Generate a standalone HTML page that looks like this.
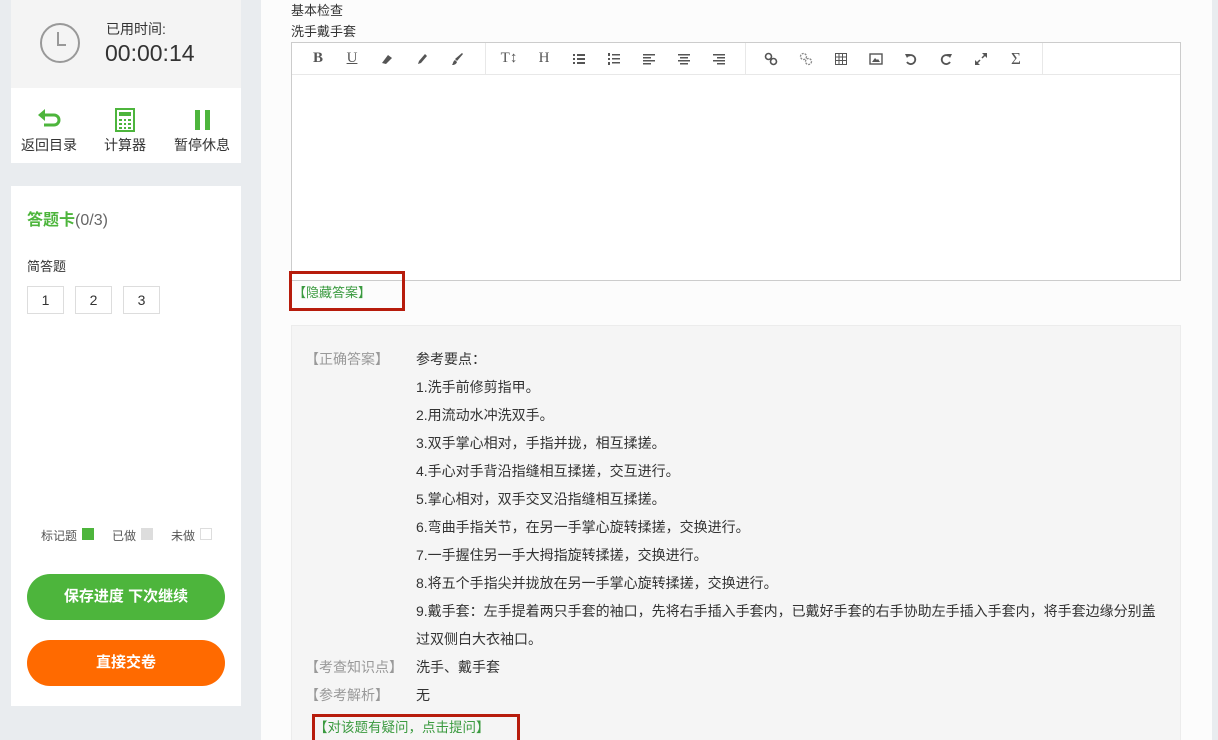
<!DOCTYPE html>
<html><head><meta charset="utf-8"><style>
*{margin:0;padding:0;box-sizing:border-box}
html,body{width:1218px;height:740px;overflow:hidden}
body{background:#e9ecef;font-family:"Liberation Sans","Noto Sans CJK SC",sans-serif;font-size:13px;color:#333;position:relative}
.a{position:absolute}
.g{color:#4db53c}
.tb span{position:absolute;top:0;height:31px;line-height:31px;width:30px;margin-left:-15px;text-align:center;color:#555;font-family:"Liberation Serif",serif;font-size:15px}
.tb svg{position:absolute;top:9px;margin-left:-7px}
.ln{position:absolute;left:416px;line-height:28px;white-space:nowrap;font-size:14px}
.lb{position:absolute;left:305px;color:#999;line-height:28px;font-size:14px}
</style></head><body>
<div class="a" style="left:11px;top:0;width:230px;height:88px;background:#f4f4f4"></div>
<svg class="a" style="left:39px;top:22px" width="42" height="42" viewBox="0 0 42 42"><circle cx="21" cy="21" r="19" fill="none" stroke="#999" stroke-width="2"/><path d="M19 10v13h8" fill="none" stroke="#999" stroke-width="2"/></svg>
<div class="a" style="left:106px;top:19px;font-size:14px;color:#333">已用时间:</div>
<div class="a" style="left:105px;top:40px;font-size:23px;color:#333">00:00:14</div>
<div class="a" style="left:11px;top:88px;width:230px;height:75px;background:#fff"></div>
<svg class="a" style="left:37px;top:109px" width="26" height="22" viewBox="0 0 26 22"><path d="M4 6h13a5 5 0 0 1 0 10H7" fill="none" stroke="#4db53c" stroke-width="3"/><path d="M1 6l7-6v12z" fill="#4db53c"/></svg>
<div class="a" style="left:21px;top:135px;font-size:14px">返回目录</div>
<svg class="a" style="left:115px;top:108px" width="20" height="24" viewBox="0 0 20 24"><rect x="1" y="1" width="18" height="22" fill="none" stroke="#4db53c" stroke-width="2"/><rect x="4" y="4" width="12" height="4" fill="#4db53c"/><path d="M4 11h3v2H4zM9 11h2v2H9zM13 11h3v2h-3zM4 15h3v2H4zM9 15h2v2H9zM13 15h3v2h-3zM4 19h3v2H4zM9 19h2v2H9zM13 19h3v2h-3z" fill="#4db53c"/></svg>
<div class="a" style="left:104px;top:135px;font-size:14px">计算器</div>
<div class="a" style="left:195px;top:110px;width:5px;height:20px;background:#4db53c"></div>
<div class="a" style="left:205px;top:110px;width:5px;height:20px;background:#4db53c"></div>
<div class="a" style="left:174px;top:135px;font-size:14px">暂停休息</div>
<div class="a" style="left:11px;top:186px;width:230px;height:520px;background:#fff"></div>
<div class="a" style="left:27px;top:206px;font-size:16px"><b class="g">答题卡</b><span style="color:#666">(0/3)</span></div>
<div class="a" style="left:27px;top:256px;font-size:13px">简答题</div>
<div class="a" style="left:27px;top:286px;width:37px;height:28px;border:1px solid #ddd;text-align:center;line-height:26px;font-size:14px">1</div>
<div class="a" style="left:75px;top:286px;width:37px;height:28px;border:1px solid #ddd;text-align:center;line-height:26px;font-size:14px">2</div>
<div class="a" style="left:123px;top:286px;width:37px;height:28px;border:1px solid #ddd;text-align:center;line-height:26px;font-size:14px">3</div>
<div class="a" style="left:41px;top:527px;font-size:12px;color:#555">标记题</div>
<div class="a" style="left:82px;top:528px;width:12px;height:12px;background:#4db53c"></div>
<div class="a" style="left:112px;top:527px;font-size:12px;color:#555">已做</div>
<div class="a" style="left:141px;top:528px;width:12px;height:12px;background:#ddd"></div>
<div class="a" style="left:171px;top:527px;font-size:12px;color:#555">未做</div>
<div class="a" style="left:200px;top:528px;width:12px;height:12px;border:1px solid #ddd"></div>
<div class="a" style="left:27px;top:574px;width:198px;height:46px;border-radius:23px;background:#4db53c;color:#fff;text-align:center;line-height:46px;font-size:15px;font-weight:bold">保存进度 下次继续</div>
<div class="a" style="left:27px;top:640px;width:198px;height:46px;border-radius:23px;background:#ff6a00;color:#fff;text-align:center;line-height:46px;font-size:15px;font-weight:bold">直接交卷</div>
<div class="a" style="left:261px;top:0;width:951px;height:740px;background:#fcfcfc"></div>
<div class="a" style="left:291px;top:2px;line-height:18px">基本检查</div>
<div class="a" style="left:291px;top:23px;line-height:18px">洗手戴手套</div>
<div class="a" style="left:291px;top:42px;width:890px;height:239px;border:1px solid #ccc;background:#fff"></div>
<div class="a" style="left:292px;top:74px;width:888px;height:1px;background:#e8e8e8"></div>
<div class="a" style="left:485px;top:43px;width:1px;height:31px;background:#e8e8e8"></div>
<div class="a" style="left:745px;top:43px;width:1px;height:31px;background:#e8e8e8"></div>
<div class="a" style="left:1042px;top:43px;width:1px;height:31px;background:#e8e8e8"></div>
<div class="a tb" style="left:0;top:43px;width:1218px;height:31px">
<span style="left:318px;font-weight:bold">B</span>
<span style="left:352px;text-decoration:underline">U</span>
<svg style="left:387px" width="14" height="14" viewBox="0 0 14 14"><path d="M2 11l6-8 4 3-6 6z" fill="#555"/></svg>
<svg style="left:422px" width="14" height="14" viewBox="0 0 14 14"><path d="M3 12l1-3 6-7 2 2-6 7z" fill="#555"/></svg>
<svg style="left:457px" width="14" height="14" viewBox="0 0 14 14"><path d="M12 1l1 1-6 7-2-2z" fill="#555"/><path d="M5 8l2 2c-1 3-4 3-5 3 1-1 1-4 3-5z" fill="#555"/></svg>
<span style="left:509px">T↕</span>
<span style="left:544px">H</span>
<svg style="left:579px" width="14" height="14" viewBox="0 0 14 14"><path d="M1 2h2v2H1zM1 6h2v2H1zM1 10h2v2H1zM5 2h8v2H5zM5 6h8v2H5zM5 10h8v2H5z" fill="#555"/></svg>
<svg style="left:614px" width="14" height="14" viewBox="0 0 14 14"><path d="M1 1h2v3H1zM1 6h2v2H1zM1 10h2v3H1zM5 2h8v1.5H5zM5 6h8v1.5H5zM5 10h8v1.5H5z" fill="#555"/></svg>
<svg style="left:649px" width="14" height="14" viewBox="0 0 14 14"><path d="M1 2h12v1.5H1zM1 5h8v1.5H1zM1 8h12v1.5H1zM1 11h8v1.5H1z" fill="#555"/></svg>
<svg style="left:684px" width="14" height="14" viewBox="0 0 14 14"><path d="M1 2h12v1.5H1zM3 5h8v1.5H3zM1 8h12v1.5H1zM3 11h8v1.5H3z" fill="#555"/></svg>
<svg style="left:719px" width="14" height="14" viewBox="0 0 14 14"><path d="M1 2h12v1.5H1zM5 5h8v1.5H5zM1 8h12v1.5H1zM5 11h8v1.5H5z" fill="#555"/></svg>
<svg style="left:771px" width="14" height="14" viewBox="0 0 14 14"><circle cx="4.5" cy="4.5" r="3" fill="none" stroke="#555" stroke-width="1.6"/><circle cx="9.5" cy="9.5" r="3" fill="none" stroke="#555" stroke-width="1.6"/></svg>
<svg style="left:806px" width="14" height="14" viewBox="0 0 14 14"><circle cx="4.5" cy="4.5" r="3" fill="none" stroke="#888" stroke-width="1.3" stroke-dasharray="2 1"/><circle cx="9.5" cy="9.5" r="3" fill="none" stroke="#888" stroke-width="1.3" stroke-dasharray="2 1"/></svg>
<svg style="left:841px" width="14" height="14" viewBox="0 0 14 14"><path d="M1.5 1.5h11v11h-11zM1.5 5h11M1.5 8.5h11M5 1.5v11M8.5 1.5v11" fill="none" stroke="#555"/></svg>
<svg style="left:876px" width="14" height="14" viewBox="0 0 14 14"><rect x="1" y="2" width="12" height="10" fill="none" stroke="#555" stroke-width="1.4"/><path d="M3 10l3-4 2 2 1-1 2 3z" fill="#555"/></svg>
<svg style="left:911px" width="14" height="14" viewBox="0 0 14 14"><path d="M4 4a4.5 4.5 0 1 1 -1 6" fill="none" stroke="#555" stroke-width="1.8"/><path d="M1 2l5 0-3 4z" fill="#555"/></svg>
<svg style="left:946px" width="14" height="14" viewBox="0 0 14 14"><path d="M10 4a4.5 4.5 0 1 0 1 6" fill="none" stroke="#555" stroke-width="1.8"/><path d="M13 2l-5 0 3 4z" fill="#555"/></svg>
<svg style="left:981px" width="14" height="14" viewBox="0 0 14 14"><path d="M8 1h5v5zM1 8v5h5z" fill="#555"/><path d="M11 3L8 6M3 11l3-3" stroke="#555" stroke-width="1.5"/></svg>
<span style="left:1016px;font-size:17px">Σ</span>
</div>
<div class="a" style="left:293px;top:284px;line-height:18px;color:#3a9a3f">【隐藏答案】</div>
<div class="a" style="left:289px;top:271px;width:116px;height:40px;border:3px solid #b71c0c"></div>
<div class="a" style="left:291px;top:325px;width:890px;height:415px;background:#f5f5f5;border:1px solid #ececec;border-bottom:none"></div>
<div class="lb" style="top:345px">【正确答案】</div>
<div class="ln" style="top:345px">参考要点：</div>
<div class="ln" style="top:373px">1.洗手前修剪指甲。</div>
<div class="ln" style="top:401px">2.用流动水冲洗双手。</div>
<div class="ln" style="top:429px">3.双手掌心相对，手指并拢，相互揉搓。</div>
<div class="ln" style="top:457px">4.手心对手背沿指缝相互揉搓，交互进行。</div>
<div class="ln" style="top:485px">5.掌心相对，双手交叉沿指缝相互揉搓。</div>
<div class="ln" style="top:513px">6.弯曲手指关节，在另一手掌心旋转揉搓，交换进行。</div>
<div class="ln" style="top:541px">7.一手握住另一手大拇指旋转揉搓，交换进行。</div>
<div class="ln" style="top:569px">8.将五个手指尖并拢放在另一手掌心旋转揉搓，交换进行。</div>
<div class="ln" style="top:597px">9.戴手套：左手提着两只手套的袖口，先将右手插入手套内，已戴好手套的右手协助左手插入手套内，将手套边缘分别盖</div>
<div class="ln" style="top:625px">过双侧白大衣袖口。</div>
<div class="lb" style="top:653px">【考查知识点】</div>
<div class="ln" style="top:653px">洗手、戴手套</div>
<div class="lb" style="top:681px">【参考解析】</div>
<div class="ln" style="top:681px">无</div>
<div class="a" style="left:314px;top:719px;line-height:18px;color:#3a9a3f;font-size:13.5px">【对该题有疑问，点击提问】</div>
<div class="a" style="left:312px;top:714px;width:208px;height:40px;border:3px solid #b71c0c"></div>
</body></html>
